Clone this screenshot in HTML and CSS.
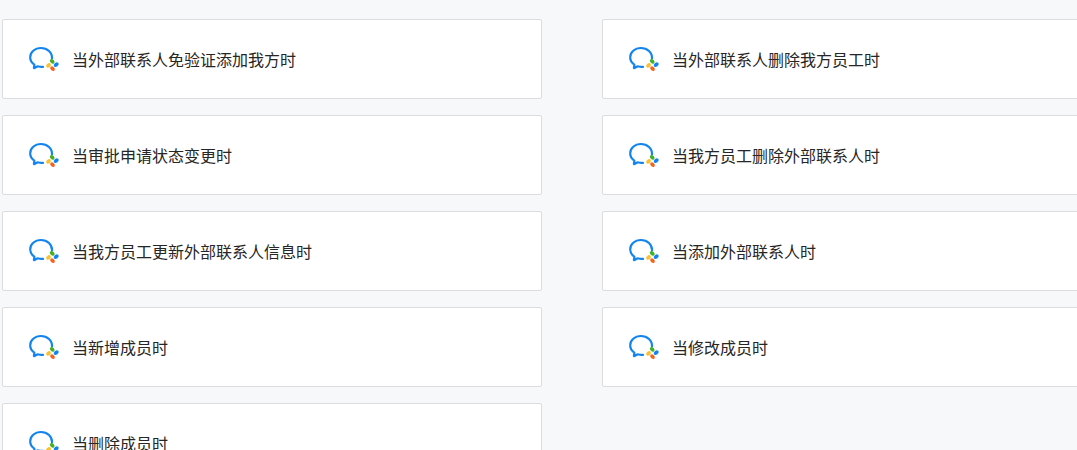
FILE: index.html
```html
<!DOCTYPE html>
<html lang="zh-CN">
<head>
<meta charset="utf-8">
<title>触发器</title>
<link rel="stylesheet" href="styles.css">
</head>
<body>
<svg class="defs" width="0" height="0" aria-hidden="true">
  <symbol id="wecom" viewBox="0 0 30 26">
    <path d="M23 12.500C23.400 6.500 18.200 2 12 2C5.800 2 1.200 6.200 1.200 11.300C1.200 14.200 2.700 16.700 5 18.400C5.400 18.700 5.500 19 5.400 19.400L4.900 21.600C4.800 22 5.100 22.200 5.500 22L8.300 20.600C8.700 20.400 9 20.400 9.400 20.500C10.900 20.900 12.400 21 14 20.800" fill="none" stroke="#1485ee" stroke-width="2.200" stroke-linecap="round" stroke-linejoin="round"/>
    <ellipse cx="19.500" cy="19.400" rx="2.700" ry="1.900" transform="rotate(-45 19.500 19.400)" fill="#fbc02d"/>
    <ellipse cx="23.200" cy="15.400" rx="2.700" ry="1.900" transform="rotate(45 23.200 15.400)" fill="#43b02a"/>
    <ellipse cx="27.200" cy="18.600" rx="2.700" ry="1.900" transform="rotate(-45 27.200 18.600)" fill="#1485ee"/>
    <ellipse cx="23.500" cy="22.600" rx="2.700" ry="1.900" transform="rotate(45 23.500 22.600)" fill="#f4661f"/>
  </symbol>
</svg>
<main class="grid">
  <div class="card"><svg class="icon"><use href="#wecom"/></svg><span class="label">当外部联系人免验证添加我方时</span></div>
  <div class="card"><svg class="icon"><use href="#wecom"/></svg><span class="label">当外部联系人删除我方员工时</span></div>
  <div class="card"><svg class="icon"><use href="#wecom"/></svg><span class="label">当审批申请状态变更时</span></div>
  <div class="card"><svg class="icon"><use href="#wecom"/></svg><span class="label">当我方员工删除外部联系人时</span></div>
  <div class="card"><svg class="icon"><use href="#wecom"/></svg><span class="label">当我方员工更新外部联系人信息时</span></div>
  <div class="card"><svg class="icon"><use href="#wecom"/></svg><span class="label">当添加外部联系人时</span></div>
  <div class="card"><svg class="icon"><use href="#wecom"/></svg><span class="label">当新增成员时</span></div>
  <div class="card"><svg class="icon"><use href="#wecom"/></svg><span class="label">当修改成员时</span></div>
  <div class="card"><svg class="icon"><use href="#wecom"/></svg><span class="label">当删除成员时</span></div>
</main>
</body>
</html>
```
FILE: styles.css
```css
html, body {
  margin: 0;
  height: 100%;
  overflow: hidden;
  background: #f7f8fa;
}

.defs {
  display: block;
  height: 0;
}

.grid {
  display: grid;
  grid-template-columns: 540px 540px;
  grid-auto-rows: 80px;
  column-gap: 60px;
  row-gap: 16px;
  padding: 19px 0 0 2px;
  width: 1140px;
}

.card {
  box-sizing: border-box;
  display: flex;
  align-items: center;
  padding-left: 26px;
  background: #fff;
  border: 1px solid #dcdde0;
  border-radius: 2px;
}

.icon {
  flex: none;
  width: 30px;
  height: 26px;
  margin-right: 13px;
}

.label {
  font-family: "Noto Sans CJK SC", "Liberation Sans", sans-serif;
  font-size: 16px;
  line-height: 24px;
  color: #262626;
}
```
